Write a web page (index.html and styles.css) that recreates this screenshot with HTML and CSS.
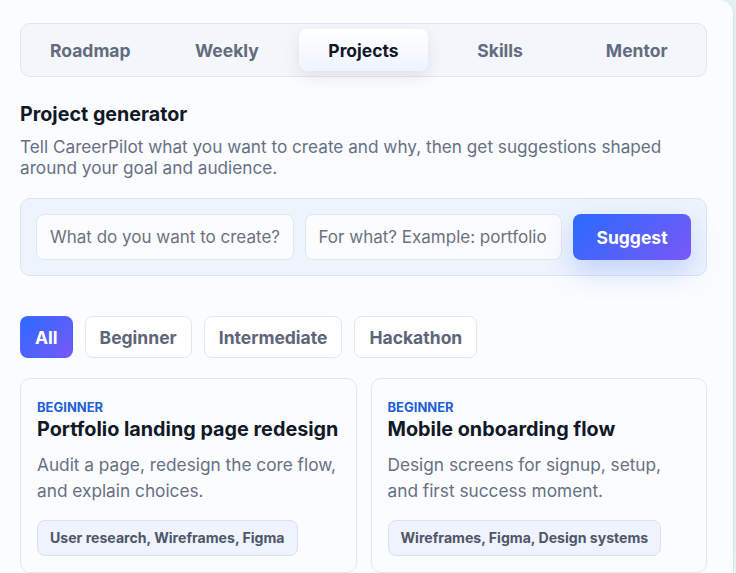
FILE: index.html
```html
<!DOCTYPE html>
<html lang="en">
<head>
    <meta charset="UTF-8">
    <meta name="viewport" content="width=device-width, initial-scale=1.0">
    <title>CareerPilot - Projects</title>
    <link rel="stylesheet" href="styles.css">
</head>
<body>
    <main class="panel">
        <nav class="tabs">
            <button class="tab">Roadmap</button>
            <button class="tab">Weekly</button>
            <button class="tab active">Projects</button>
            <button class="tab">Skills</button>
            <button class="tab">Mentor</button>
        </nav>

        <section class="generator">
            <h2>Project generator</h2>
            <p class="lead">Tell CareerPilot what you want to create and why, then get suggestions shaped around your goal and audience.</p>
            <form class="generator-form">
                <input type="text" placeholder="What do you want to create?">
                <input type="text" placeholder="For what? Example: portfolio">
                <button type="button" class="suggest">Suggest</button>
            </form>
        </section>

        <div class="filters">
            <button class="filter active">All</button>
            <button class="filter">Beginner</button>
            <button class="filter">Intermediate</button>
            <button class="filter">Hackathon</button>
        </div>

        <div class="projects">
            <article class="project">
                <span class="level">Beginner</span>
                <h3>Portfolio landing page redesign</h3>
                <p>Audit a page, redesign the core flow, and explain choices.</p>
                <span class="skills">User research, Wireframes, Figma</span>
            </article>
            <article class="project">
                <span class="level">Beginner</span>
                <h3>Mobile onboarding flow</h3>
                <p>Design screens for signup, setup, and first success moment.</p>
                <span class="skills">Wireframes, Figma, Design systems</span>
            </article>
        </div>
    </main>
</body>
</html>
```

FILE: styles.css
```css
body {
    margin: 0;
    font-family: 'Inter', 'Roboto', sans-serif;
    background-color: #e9f6f5;
    color: #0f172a;
    overflow: hidden;
}

.panel {
    width: 734px;
    height: 573px;
    box-sizing: border-box;
    padding: 23px 26px 0 20px;
    background-color: #fbfcfe;
    border-right: 1px solid #cdeceb;
    border-top-right-radius: 14px;
    box-shadow: 0 -6px 18px rgba(120, 160, 220, 0.15);
}

button,
input {
    font-family: inherit;
}

/* tabs */
.tabs {
    display: grid;
    grid-template-columns: repeat(5, 1fr);
    gap: 8px;
    padding: 5px;
    background-color: #f3f6fa;
    border: 1px solid #e1e7ef;
    border-radius: 10px;
}

.tab {
    height: 42px;
    border: none;
    border-radius: 8px;
    background: none;
    font-size: 17.5px;
    font-weight: 700;
    color: #636b7e;
    cursor: pointer;
}

.tab.active {
    color: #111827;
    background: linear-gradient(180deg, #ffffff 0%, #eef4fe 100%);
    box-shadow: 0 6px 16px rgba(100, 116, 139, 0.14);
}

/* generator */
.generator h2 {
    margin: 25px 0 10px;
    font-size: 19.7px;
    font-weight: 700;
    color: #111827;
}

.lead {
    margin: 0 0 20px;
    font-size: 17.2px;
    line-height: 21px;
    color: #667085;
    padding-right: 20px;
}

.generator-form {
    display: flex;
    gap: 11px;
    padding: 15px;
    background-color: #eef4fd;
    border: 1px solid #d9e4f4;
    border-radius: 10px;
}

.generator-form input {
    flex: 1;
    min-width: 0;
    height: 46px;
    box-sizing: border-box;
    padding: 0 13px;
    font-size: 17px;
    color: #111827;
    background-color: #fbfcfe;
    border: 1px solid #e1e7ef;
    border-radius: 8px;
}

.generator-form input::placeholder {
    color: #6b7280;
}

.suggest {
    width: 118px;
    flex-shrink: 0;
    border: none;
    border-radius: 8px;
    font-size: 17.5px;
    font-weight: 700;
    color: #fff;
    background: linear-gradient(135deg, #2a6bfe 0%, #7a58f7 100%);
    box-shadow: 0 12px 28px rgba(60, 110, 250, 0.25);
    cursor: pointer;
}

/* filters */
.filters {
    display: flex;
    gap: 12px;
    margin-top: 40px;
}

.filter {
    height: 42px;
    padding: 0 14px;
    font-size: 17.5px;
    font-weight: 700;
    color: #5d6579;
    background-color: #fff;
    border: 1px solid #e1e7ef;
    border-radius: 8px;
    cursor: pointer;
}

.filter.active {
    color: #fff;
    border-color: transparent;
    background: linear-gradient(135deg, #2a6bfe 0%, #7a58f7 100%);
}

/* project cards */
.projects {
    display: grid;
    grid-template-columns: 1fr 1fr;
    gap: 14px;
    margin-top: 20px;
}

.project {
    height: 195px;
    box-sizing: border-box;
    padding: 20px 16px 0;
    background-color: #fbfcfe;
    border: 1px solid #e1e7ef;
    border-radius: 10px;
}

.level {
    display: block;
    font-size: 13px;
    font-weight: 700;
    text-transform: uppercase;
    color: #1d5fd8;
}

.project h3 {
    margin: 2px 0 11px;
    font-size: 19.8px;
    font-weight: 700;
    color: #111827;
    white-space: nowrap;
}

.project p {
    margin: 0 0 16px;
    font-size: 17.25px;
    line-height: 26px;
    color: #667085;
}

.skills {
    display: inline-block;
    padding: 8px 12px 9px;
    font-size: 14.1px;
    font-weight: 700;
    color: #4e5669;
    background-color: #eef3fd;
    border: 1px solid #d6e1f5;
    border-radius: 8px;
}
```
